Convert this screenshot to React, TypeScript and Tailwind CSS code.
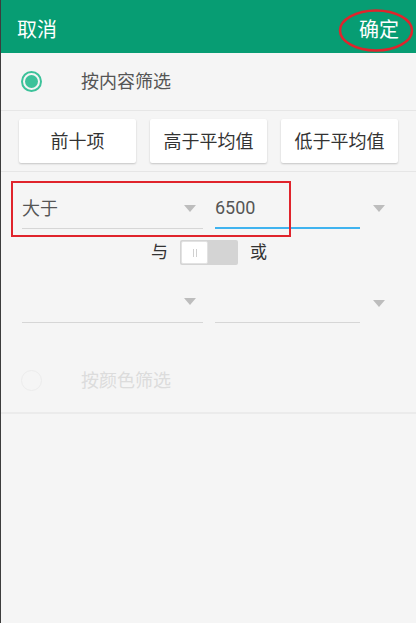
import React from "react";

const Arrow = () => (
  <svg width="12" height="7" viewBox="0 0 12 7" className="shrink-0">
    <path d="M0 0 L12 0 L6 7 Z" fill="#bdbdbd" />
  </svg>
);

const Radio = ({ checked }: { checked: boolean }) =>
  checked ? (
    <div className="w-[21px] h-[21px] rounded-full border-2 border-[#3cc29a] flex items-center justify-center">
      <div className="w-[13px] h-[13px] rounded-full bg-[#3cc29a]" />
    </div>
  ) : (
    <div className="w-[21px] h-[21px] rounded-full border border-[#ececec]" />
  );

const Spinner = ({ text, width }: { text?: string; width: string }) => (
  <div className={`${width} h-[41px] flex items-center justify-between border-b border-[#d6d6d6] pr-[7px]`}>
    <span className="text-[18px] text-[#555]">{text}</span>
    <Arrow />
  </div>
);

export default function App() {
  const buttons = ["前十项", "高于平均值", "低于平均值"];
  return (
    <div className="relative w-[416px] h-[623px] bg-[#f5f5f5] border-l border-[#3d3d3d] font-['Roboto','Noto_Sans_CJK_SC',sans-serif] overflow-hidden">
      {/* header */}
      <div className="relative h-[53px] bg-[#079d73] flex items-center justify-between pl-[16px] pr-[17px] pt-[7px]">
        <span className="text-white text-[20px]">取消</span>
        <span className="text-white text-[20px]">确定</span>
        <svg className="absolute left-[337px] top-[9px]" width="76" height="43" viewBox="0 0 76 43">
          <ellipse cx="38" cy="21.5" rx="36" ry="20" fill="none" stroke="#e0242c" strokeWidth="2.5" />
        </svg>
      </div>

      {/* by content */}
      <div className="h-[58px] flex items-center border-b border-[#e6e6e6]">
        <div className="w-[80px] pl-[20px]">
          <Radio checked />
        </div>
        <span className="text-[18px] text-[#555]">按内容筛选</span>
      </div>

      {/* quick buttons */}
      <div className="flex gap-[14px] pl-[18px] pt-[8px] pb-[8px] border-b border-[#e6e6e6]">
        {buttons.map((b) => (
          <div
            key={b}
            className="w-[117px] h-[44px] bg-white rounded-[2px] shadow-[0_1px_2px_rgba(0,0,0,0.2)] flex items-center justify-center text-[18px] text-[#333]"
          >
            {b}
          </div>
        ))}
      </div>

      {/* conditions */}
      <div className="relative pl-[21px]">
        <div className="flex items-end gap-[12px] pt-[16px]">
          <Spinner text="大于" width="w-[181px]" />
          <div className="w-[145px] h-[41px] flex items-center border-b-2 border-[#3fb3ef]">
            <span className="text-[18px] text-[#555]">6500</span>
          </div>
          <div className="h-[41px] flex items-center pl-[1px]">
            <Arrow />
          </div>
        </div>

        <div className="flex items-center gap-[12px] mt-[11px] pl-[129px]">
          <span className="text-[17px] text-[#333]">与</span>
          <div className="w-[58px] h-[25px] bg-[#d4d4d4] rounded-[2px] p-[1px] flex">
            <div className="w-[27px] h-full bg-white rounded-[2px] border border-[#e2e2e2] flex items-center justify-center gap-[2px]">
              <div className="w-px h-[8px] bg-[#d0d0d0]" />
              <div className="w-px h-[8px] bg-[#d0d0d0]" />
            </div>
          </div>
          <span className="text-[17px] text-[#333]">或</span>
        </div>

        <div className="flex items-end gap-[12px] mt-[16px]">
          <Spinner width="w-[181px]" />
          <div className="w-[145px] h-[41px] border-b border-[#d6d6d6]" />
          <div className="h-[41px] flex items-center pl-[1px] pt-[2px]">
            <Arrow />
          </div>
        </div>

        <div className="absolute left-[10px] top-[9px] w-[280px] h-[56px] border-2 border-[#e0242c]" />
      </div>

      {/* by color */}
      <div className="h-[61px] pb-[3px] mt-[30px] flex items-center border-b-2 border-[#ebebeb]">
        <div className="w-[80px] pl-[20px]">
          <Radio checked={false} />
        </div>
        <span className="text-[18px] text-[#dcdcdc]">按颜色筛选</span>
      </div>
    </div>
  );
}
